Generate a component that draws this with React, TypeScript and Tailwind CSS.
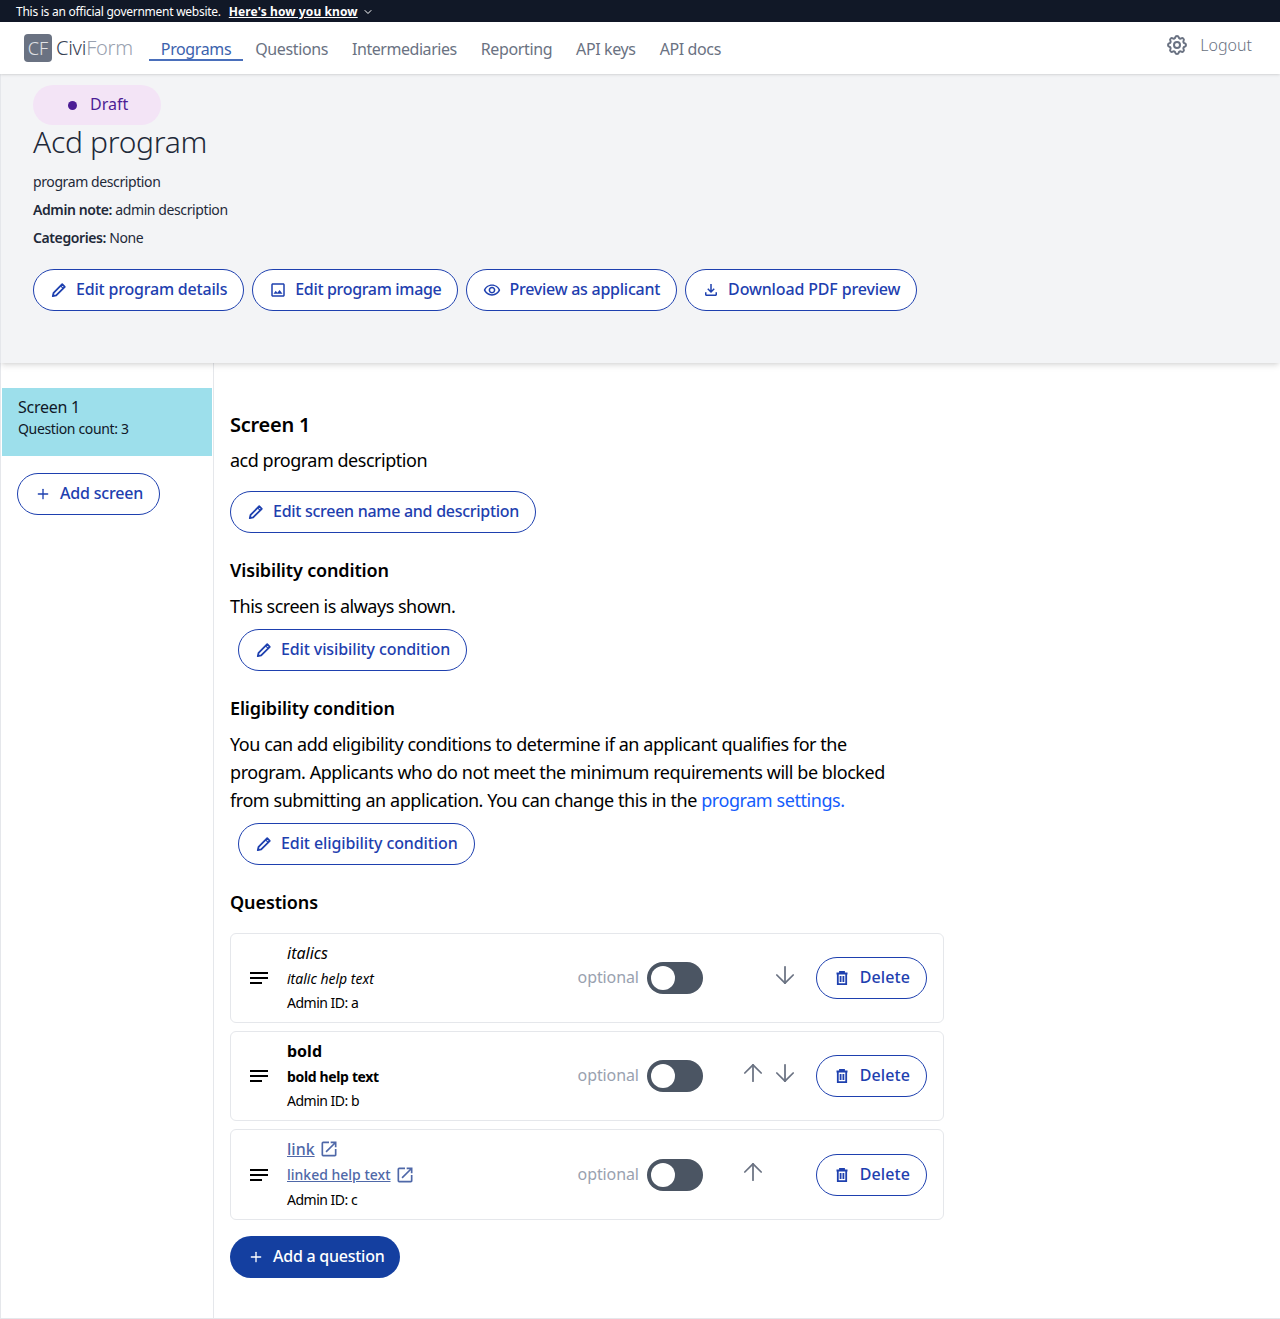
import type { ReactNode } from "react";
import { ArrowDown, ArrowUp, ChevronDown, Plus } from "lucide-react";
import { HiOutlineCog } from "react-icons/hi";
import {
  MdOpenInNew,
  MdOutlineFileDownload,
  MdOutlineImage,
  MdOutlineRemoveRedEye,
} from "react-icons/md";

function Pill({ icon, children, className = "", tracking = "tracking-[-0.2px]" }: { icon: ReactNode; children: ReactNode; className?: string; tracking?: string }) {
  return (
    <button className={`h-[42px] pl-4 pr-4 pb-[2px] flex items-center gap-2 shrink-0 rounded-full border border-[#1e40af] bg-white text-[#1e40af] text-base font-medium whitespace-nowrap ${tracking} ${className}`}>
      <span className="w-[18px] flex justify-center translate-y-px">{icon}</span>
      {children}
    </button>
  );
}

function PencilIcon() {
  return (
    <svg width="16" height="16" viewBox="0 0 16 16" fill="none" stroke="currentColor" strokeWidth="1.8" strokeLinejoin="round">
      <path d="M11.2 2.2l2.6 2.6-8.6 8.6-3.4.8.8-3.4z" />
      <path d="M9.6 3.8l2.6 2.6" strokeWidth="1.2" />
    </svg>
  );
}

function TrashIcon() {
  return (
    <svg width="16" height="16" viewBox="0 0 16 16" fill="none" stroke="currentColor" strokeWidth="1.8">
      <path d="M2.5 3.5h11M6 3.2V1.8h4v1.4M3.8 3.5v10.7h8.4V3.5M6.6 6v6M9.4 6v6" />
    </svg>
  );
}

function BarsIcon() {
  return (
    <svg width="18" height="12" viewBox="0 0 18 12" className="shrink-0 text-black" fill="currentColor">
      <rect width="18" height="2" />
      <rect y="5" width="18" height="2" />
      <rect y="10" width="12" height="2" />
    </svg>
  );
}

function QuestionCard({ title, help, adminId, up, down, h = "h-[90px]" }: { title: ReactNode; help: ReactNode; adminId: string; up?: boolean; down?: boolean; h?: string }) {
  return (
    <div className={`${h} w-[714px] flex items-center rounded-md border border-gray-200 bg-white pl-[19px] pr-4`}>
      <BarsIcon />
      <div className="ml-[19px] w-[291px] pb-[2px] text-sm text-black">
        {title}
        {help}
        <div className="mt-1 leading-[20px] tracking-[-0.5px]">Admin ID: {adminId}</div>
      </div>
      <span className="pb-[2px] text-base text-gray-400 tracking-[-0.1px]">optional</span>
      <div className="ml-2 h-8 w-14 rounded-full bg-[#4b5563] pl-1 pt-1">
        <div className="h-6 w-6 rounded-full bg-white" />
      </div>
      <div className="ml-[34px] w-[32px] flex justify-center text-gray-500">
        {up && <ArrowUp size={28} strokeWidth={1.5} className="-translate-y-[3px]" />}
      </div>
      <div className="w-[32px] flex justify-center text-gray-500">
        {down && <ArrowDown size={28} strokeWidth={1.5} className="-translate-y-[3px]" />}
      </div>
      <Pill className="ml-[15px]" tracking="tracking-[0.1px]" icon={<TrashIcon />}><span className="ml-px">Delete</span></Pill>
    </div>
  );
}

export default function App() {
  return (
    <div className="w-[1280px] h-[1319px] overflow-hidden bg-white text-black flex flex-col" style={{ fontFamily: '"Noto Sans", "Open Sans", sans-serif' }}>
      <div className="h-[22px] shrink-0 bg-[#111827] text-white text-xs flex items-center pl-4">
        <span className="tracking-[-0.26px] translate-y-px">This is an official government website.</span>
        <span className="ml-2 font-bold underline tracking-[0.1px] translate-y-px">Here's how you know</span>
        <ChevronDown size={12} className="ml-1 translate-y-px" />
      </div>

      <nav className="relative z-20 h-[52px] shrink-0 bg-white shadow flex items-center pl-6 pr-7">
        <div className="h-7 w-7 rounded-sm bg-gray-500 text-white/80 text-lg font-light flex items-center justify-center">CF</div>
        <span className="ml-1 text-xl font-light text-gray-700 tracking-[-0.25px]">Civi<span className="text-gray-400">Form</span></span>
        <div className="ml-[16px] flex items-center gap-6 text-base text-gray-500 tracking-[-0.38px]">
          <span className="border-b-2 border-[#4a6fbb] px-3 text-[#3b62ad] h-[24px] translate-y-px leading-[24px]">Programs</span>
          <span className="-ml-3 translate-y-px">Questions</span>
          <span className="translate-y-px tracking-[-0.45px]">Intermediaries</span>
          <span className="translate-y-px">Reporting</span>
          <span className="translate-y-px">API keys</span>
          <span className="translate-y-px">API docs</span>
        </div>
        <div className="ml-auto flex items-center gap-[11px] text-gray-500 -translate-y-[3px]">
          <HiOutlineCog size={24} />
          <span className="text-base font-light">Logout</span>
        </div>
      </nav>

      <header className="relative z-10 h-[289px] shrink-0 border-l border-gray-200 bg-gray-100 shadow-md pl-8 pt-[11px]">
        <div className="h-10 w-32 rounded-full bg-[#f3e4f6] flex items-center pl-[35px] pb-[2px] text-[#4c1d95] text-base">
          <span className="h-[9px] w-[9px] translate-y-px rounded-full bg-[#4c1d95]" />
          <span className="ml-[13px]">Draft</span>
        </div>
        <h1 className="-mt-px text-3xl font-light leading-9 text-gray-800 tracking-[-0.3px]">Acd program</h1>
        <div className="mt-2 text-sm text-gray-800 leading-7 tracking-[-0.4px]">
          <p>program description</p>
          <p><span className="font-semibold">Admin note:</span> admin description</p>
          <p><span className="font-semibold">Categories:</span> None</p>
        </div>
        <div className="mt-[17px] flex gap-2">
          <Pill icon={<PencilIcon />}>Edit program details</Pill>
          <Pill tracking="tracking-[-0.33px]" icon={<MdOutlineImage size={18} />}>Edit program image</Pill>
          <Pill tracking="tracking-[-0.25px]" icon={<MdOutlineRemoveRedEye size={18} />}>Preview as applicant</Pill>
          <Pill tracking="tracking-[-0.15px]" icon={<MdOutlineFileDownload size={20} />}>Download PDF preview</Pill>
        </div>
      </header>

      <div className="flex flex-1 border-l border-b border-gray-200">
        <aside className="w-[213px] shrink-0 border-r border-gray-200 pt-[25px] pl-px">
          <div className="h-[68px] w-[210px] bg-[#9ddfeb] px-4 pt-2 text-gray-900">
            <div className="text-base leading-[22px] tracking-[-0.25px]">Screen 1</div>
            <div className="text-sm leading-[22px] tracking-[-0.35px]">Question count: 3</div>
          </div>
          <div className="mt-[17px] ml-[15px] flex">
            <Pill tracking="tracking-[-0.2px]" icon={<Plus size={16} />}>Add screen</Pill>
          </div>
        </aside>

        <main className="pl-4 pt-[48px]">
          <h2 className="text-xl font-semibold leading-7 tracking-[-0.25px]">Screen 1</h2>
          <p className="mt-[7px] text-lg leading-7 tracking-[-0.48px]">acd program description</p>
          <div className="mt-[17px] flex"><Pill tracking="tracking-[-0.28px]" icon={<PencilIcon />}>Edit screen name and description</Pill></div>

          <h3 className="mt-[23px] text-lg font-semibold leading-7 tracking-[-0.15px]">Visibility condition</h3>
          <p className="mt-2 text-lg leading-7 tracking-[-0.5px]">This screen is always shown.</p>
          <div className="mt-[9px] ml-2 flex"><Pill tracking="tracking-[-0.12px]" icon={<PencilIcon />}>Edit visibility condition</Pill></div>

          <h3 className="mt-[23px] text-lg font-semibold leading-7 tracking-[-0.15px]">Eligibility condition</h3>
          <p className="mt-2 w-[672px] text-lg leading-7 tracking-[-0.44px]">
            You can add eligibility conditions to determine if an applicant qualifies for the program. Applicants who do not meet the minimum requirements will be blocked from submitting an application. You can change this in the <span className="text-blue-600">program settings.</span>
          </p>
          <div className="mt-[9px] ml-2 flex"><Pill tracking="tracking-[-0.1px]" icon={<PencilIcon />}>Edit eligibility condition</Pill></div>

          <h3 className="mt-[23px] text-lg font-semibold leading-7 tracking-[-0.1px]">Questions</h3>
          <div className="mt-[17px] flex flex-col gap-2">
            <QuestionCard
              title={<div className="italic text-base leading-6">italics</div>}
              help={<div className="mt-1 italic leading-5">italic help text</div>}
              adminId="a"
              down
            />
            <QuestionCard
              title={<div className="font-bold text-base leading-6">bold</div>}
              help={<div className="mt-1 font-bold leading-5 tracking-[-0.35px]">bold help text</div>}
              adminId="b"
              up
              down
            />
            <QuestionCard
              h="h-[91px]"
              title={<div className="flex items-center gap-1 text-base leading-6 text-[#4f68a8] font-medium -translate-y-px"><span className="underline">link</span><MdOpenInNew size={20} /></div>}
              help={<div className="mt-1 flex items-center gap-1 leading-5 text-[#4f68a8] font-medium -translate-y-px"><span className="underline">linked help text</span><MdOpenInNew size={20} /></div>}
              adminId="c"
              up
            />
          </div>
          <div className="mt-4 flex">
            <button className="h-[42px] pl-4 pr-4 pb-[2px] flex items-center gap-2 rounded-full bg-[#143fa0] text-white text-base font-medium tracking-[-0.25px]">
              <span className="w-[19px] flex justify-center translate-y-px"><Plus size={16} /></span>
              Add a question
            </button>
          </div>
        </main>
      </div>
    </div>
  );
}
